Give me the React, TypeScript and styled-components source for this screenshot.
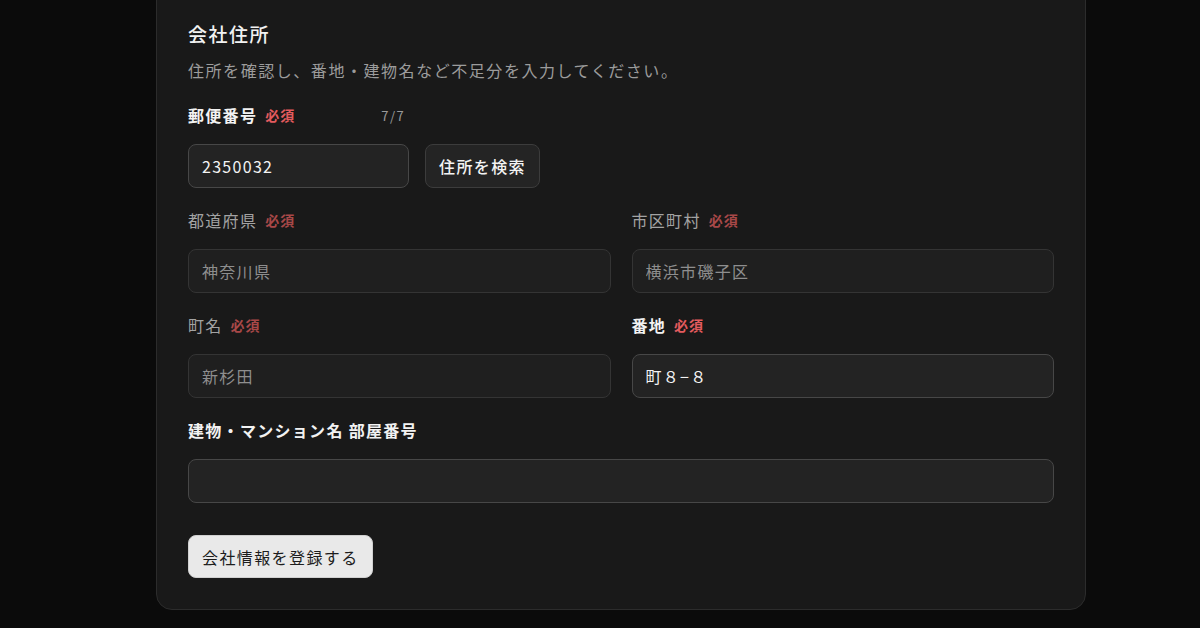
import React from 'react';
import styled, { createGlobalStyle } from 'styled-components';

const GlobalStyle = createGlobalStyle`
  html, body {
    margin: 0;
    padding: 0;
    background: #0b0b0b;
    font-family: 'Noto Sans CJK JP', 'Noto Sans', sans-serif;
    overflow: hidden;
  }
`;

const Page = styled.div`
  width: 1200px;
  height: 628px;
  display: flex;
  padding-left: 156px;
  box-sizing: border-box;
  background: #0b0b0b;
  overflow: hidden;
`;

const Card = styled.section`
  box-sizing: border-box;
  width: 930px;
  margin-top: -40px;
  align-self: flex-start;
  padding: 60px 31px 31px;
  background: #191919;
  border: 1px solid #2c2c2c;
  border-radius: 16px;
`;

const Title = styled.h2`
  margin: 0;
  font-size: 19px;
  line-height: 26px;
  font-weight: 500;
  letter-spacing: 1.5px;
  color: #f2f2f2;
`;

const Description = styled.p`
  margin: 12px 0 23px;
  font-size: 16px;
  line-height: 22px;
  color: #9c9c9c;
  letter-spacing: 1.55px;
`;

const Grid = styled.div`
  display: grid;
  grid-template-columns: 1fr 1fr;
  column-gap: 21px;
  row-gap: 21px;
`;

const Field = styled.div<{ $full?: boolean }>`
  display: flex;
  flex-direction: column;
  gap: 18px;
  grid-column: ${(p) => (p.$full ? '1 / -1' : 'auto')};
`;

const LabelRow = styled.div`
  display: flex;
  align-items: center;
  height: 22px;
`;

const Label = styled.label<{ $disabled?: boolean }>`
  font-size: 16px;
  line-height: 22px;
  letter-spacing: 1.3px;
  font-weight: ${(p) => (p.$disabled ? 400 : 600)};
  color: ${(p) => (p.$disabled ? '#a3a3a3' : '#f2f2f2')};
`;

const Required = styled.span<{ $disabled?: boolean }>`
  margin-left: 8px;
  font-size: 14px;
  font-weight: 700;
  letter-spacing: 1px;
  color: ${(p) => (p.$disabled ? '#a84848' : '#e35b5e')};
`;

const Counter = styled.span`
  margin-left: 86px;
  font-size: 13px;
  color: #9a9a9a;
  letter-spacing: 1.5px;
`;

const InputRow = styled.div`
  display: flex;
  gap: 16px;
`;

const Input = styled.input<{ $width?: number }>`
  box-sizing: border-box;
  width: ${(p) => (p.$width ? `${p.$width}px` : '100%')};
  height: 44px;
  padding: 0 13px;
  border-radius: 8px;
  border: 1px solid #474747;
  background: #232323;
  color: #f3f3f3;
  font-family: inherit;
  font-size: 16px;
  letter-spacing: 1.3px;
  outline: none;

  &:disabled {
    border-color: #343434;
    background: #1f1f1f;
    color: #8e8e8e;
  }
`;

const SearchButton = styled.button`
  box-sizing: border-box;
  height: 44px;
  padding: 0 13px;
  border-radius: 8px;
  border: 1px solid #3c3c3c;
  background: #242424;
  color: #f3f3f3;
  font-family: inherit;
  font-size: 16px;
  font-weight: 500;
  letter-spacing: 1.4px;
`;

const SubmitButton = styled.button`
  box-sizing: border-box;
  margin-top: 32px;
  height: 43px;
  padding: 0 13px;
  border-radius: 8px;
  border: 1px solid #d0d0d0;
  background: #e9e9e9;
  color: #1d1d1d;
  font-family: inherit;
  font-size: 16px;
  letter-spacing: 1.4px;
`;

interface FieldProps {
  label: string;
  value: string;
  required?: boolean;
  disabled?: boolean;
  full?: boolean;
}

const AddressField = ({ label, value, required, disabled, full }: FieldProps) => (
  <Field $full={full}>
    <LabelRow>
      <Label $disabled={disabled}>{label}</Label>
      {required && <Required $disabled={disabled}>必須</Required>}
    </LabelRow>
    <Input value={value} disabled={disabled} readOnly />
  </Field>
);

export default function App() {
  return (
    <Page>
      <GlobalStyle />
      <Card>
        <Title>会社住所</Title>
        <Description>住所を確認し、番地・建物名など不足分を入力してください。</Description>
        <Grid>
          <Field $full>
            <LabelRow>
              <Label>郵便番号</Label>
              <Required>必須</Required>
              <Counter>7/7</Counter>
            </LabelRow>
            <InputRow>
              <Input $width={221} value="2350032" readOnly />
              <SearchButton>住所を検索</SearchButton>
            </InputRow>
          </Field>
          <AddressField label="都道府県" value="神奈川県" required disabled />
          <AddressField label="市区町村" value="横浜市磯子区" required disabled />
          <AddressField label="町名" value="新杉田" required disabled />
          <AddressField label="番地" value="町８−８" required />
          <AddressField label="建物・マンション名 部屋番号" value="" full />
        </Grid>
        <SubmitButton>会社情報を登録する</SubmitButton>
      </Card>
    </Page>
  );
}
